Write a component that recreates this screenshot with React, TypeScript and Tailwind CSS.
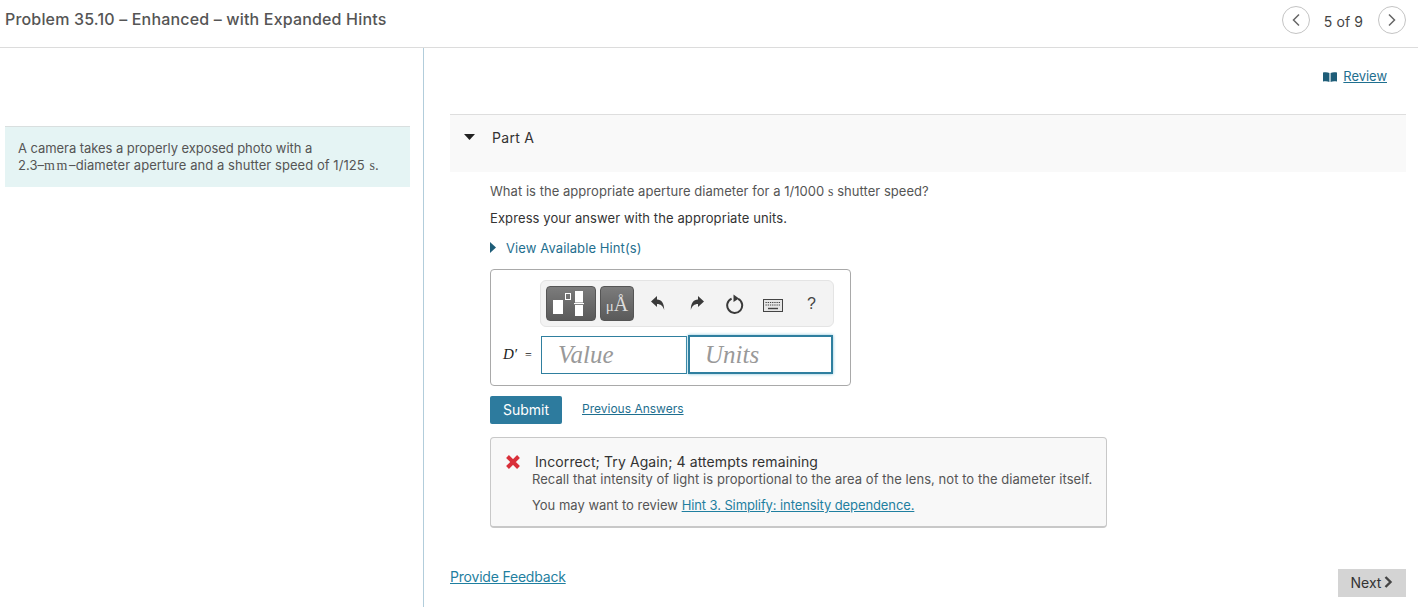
import * as React from 'react';

const font = { fontFamily: 'Inter, "Liberation Sans", Arial, sans-serif' };
const serif = { fontFamily: '"Liberation Serif", serif' };

function ChevronCircle({ dir }: { dir: 'left' | 'right' }) {
  return (
    <button className="w-[28px] h-[28px] rounded-full border border-[#c4c4c4] bg-white flex items-center justify-center">
      <svg width="10" height="14" viewBox="0 0 10 14" fill="none" stroke="#666" strokeWidth="1.5">
        {dir === 'left' ? <path d="M8 1.5 2.5 7 8 12.5" /> : <path d="M2 1.5 7.5 7 2 12.5" />}
      </svg>
    </button>
  );
}

function TemplatesIcon() {
  return (
    <svg width="36" height="28" viewBox="0 0 36 28" fill="white">
      <rect x="0" y="10" width="10" height="14" />
      <rect x="12.5" y="3.5" width="5" height="6" fill="none" stroke="white" strokeWidth="1" />
      <rect x="22" y="1" width="8" height="11.5" />
      <rect x="21" y="13" width="10" height="1.2" />
      <rect x="22" y="15" width="8" height="11" />
    </svg>
  );
}

function Toolbar() {
  return (
    <div className="ml-[37px] w-[294px] h-[47px] rounded-[6px] bg-[#f3f3f3] border border-[#e4e4e4] flex items-center pl-[5px]">
      <div className="w-[50px] h-[35px] rounded-[4px] border border-[#555] bg-gradient-to-b from-[#7c7c7c] to-[#5a5a5a] flex items-center justify-center overflow-hidden">
        <TemplatesIcon />
      </div>
      <div className="ml-[4px] w-[34px] h-[35px] rounded-[4px] border border-[#555] bg-gradient-to-b from-[#7c7c7c] to-[#5a5a5a] flex items-end justify-center pb-[6px] text-[#dddddd] leading-none" style={serif}>
        <span className="text-[15px]">μ</span>
        <span className="text-[20px]">Å</span>
      </div>
      <svg className="ml-[16px]" width="16" height="17" viewBox="0 0 16 17" fill="#3a3a3a">
        <path d="M1 6.5 7 1v3.4c4.6.2 7.2 3.4 7.2 10.6-1.4-4.4-3.4-6-7.2-6.1V12Z" />
      </svg>
      <svg className="ml-[23px]" width="16" height="17" viewBox="0 0 16 17" fill="#3a3a3a">
        <path d="M15 6.5 9 1v3.4C4.4 4.6 1.8 7.8 1.8 15c1.4-4.4 3.4-6 7.2-6.1V12Z" />
      </svg>
      <svg className="ml-[21px]" width="18" height="20" viewBox="0 0 18 20" fill="none" stroke="#3a3a3a" strokeWidth="2">
        <path d="M12.2 4.8A7.5 7.5 0 1 1 5.6 4.6" />
        <path d="M7.5 0.6 13 4.4 7.5 8Z" fill="#3a3a3a" stroke="none" />
      </svg>
      <svg className="ml-[19px] mt-[3px]" width="20" height="13" viewBox="0 0 20 13" fill="none">
        <rect x="0.5" y="0.5" width="19" height="12" fill="#e6e6e6" stroke="#444" />
        <path d="M2.5 3.5h15M2.5 6h15" stroke="#444" strokeWidth="1.2" strokeDasharray="1.3 0.9" />
        <path d="M5 9.5h10" stroke="#444" strokeWidth="1.4" />
      </svg>
      <span className="ml-[24px] text-[16px] leading-none text-[#444]" style={{ fontFamily: '"Liberation Sans", sans-serif' }}>?</span>
    </div>
  );
}

export default function App() {
  return (
    <div className="w-[1418px] h-[607px] bg-white overflow-hidden text-[#333]" style={font}>
      <header className="h-[48px] border-b border-[#dcdcdc] flex items-center justify-between pl-[5px] pr-[12px] pb-[10px]">
        <h1 className="text-[16px] text-[#555] font-medium tracking-[0.17px]">Problem 35.10 – Enhanced – with Expanded Hints</h1>
        <div className="flex items-center mt-[3px] text-[14px] text-[#444]">
          <ChevronCircle dir="left" />
          <span className="ml-[14px] mr-[15px] mt-[3px] tracking-[0.1px]">5 of 9</span>
          <ChevronCircle dir="right" />
        </div>
      </header>

      <div className="flex h-[559px]">
        <aside className="w-[424px] shrink-0 border-r border-[#b2cddb] pl-[5px] pt-[78px]">
          <div className="w-[405px] h-[61px] bg-[#e5f4f4] border-t border-[#d9dfdf] pl-[13px] pt-[13px] text-[13px] leading-[17px] text-[#555]">
            <p className="tracking-[-0.06px]">A camera takes a properly exposed photo with a</p>
            <p className="tracking-[0.06px]">
              2.3–<span style={serif} className="text-[14px] tracking-[1.6px]">mm</span>–diameter aperture and a shutter speed of 1/125 <span style={serif} className="text-[14px] ml-[1px]">s</span>.
            </p>
          </div>
        </aside>

        <main className="flex-1 pl-[26px] pr-[12px] flex flex-col">
          <div className="h-[66px] pt-[20px] flex justify-end pr-[19px]">
            <a className="flex items-center h-[17px] text-[13px] text-[#1f6f8f] underline">
              <svg width="14" height="10" viewBox="0 0 14 10" fill="#1e5d78">
                <path d="M0 0.6C2 0 4.6 0 6.4 1v9C4.6 9 2 9 0 9.6ZM7.6 1C9.4 0 12 0 14 0.6v9C12 9 9.4 9 7.6 10Z" />
              </svg>
              <span className="ml-[6px] tracking-[-0.05px]">Review</span>
            </a>
          </div>

          <div className="h-[58px] bg-[#f9f9f9] border-t border-[#dedede] flex items-start pt-[14px] pl-[14px]">
            <svg className="mt-[5px]" width="11" height="6" viewBox="0 0 11 6" fill="#222">
              <path d="M0 0h11L5.5 6Z" />
            </svg>
            <span className="ml-[17px] text-[14px] leading-[17px] text-[#333] tracking-[0.3px]">Part A</span>
          </div>

          <div className="pl-[40px] flex flex-col items-start">
            <p className="mt-[11px] text-[13px] leading-[17px] text-[#555] tracking-[0.04px]">
              What is the appropriate aperture diameter for a 1/1000 <span style={serif} className="text-[14px]">s</span> shutter speed?
            </p>
            <p className="mt-[10px] text-[13px] leading-[17px] text-[#333] tracking-[0.1px]">Express your answer with the appropriate units.</p>
            <div className="mt-[13px] flex items-center h-[17px] text-[13px] text-[#1f6f8f] tracking-[0.1px]">
              <svg width="6" height="11" viewBox="0 0 6 11" fill="#1e5d78" className="mb-[2px]">
                <path d="M0 0l6 5.5L0 11Z" />
              </svg>
              <span className="ml-[10px]">View Available Hint(s)</span>
            </div>

            <div className="mt-[12px] w-[361px] h-[117px] rounded-[4px] border border-[#a9a9a9] pl-[12px] pt-[10px]">
              <Toolbar />
              <div className="flex items-center mt-[8px]">
                <span className="w-[38px] text-[15px] text-[#222] whitespace-nowrap" style={serif}>
                  <i>D′</i> <span className="text-[12px] ml-[4px]">=</span>
                </span>
                <div className="w-[146px] h-[38px] border border-[#2f7f9f] flex items-center pl-[16px] text-[25px] italic text-[#999]" style={serif}>
                  Value
                </div>
                <div className="ml-[1px] w-[145px] h-[39px] border-2 border-[#2f7f9f] shadow-[0_0_3px_#7fc0d8] flex items-center pl-[15px] text-[25px] italic text-[#999]" style={serif}>
                  Units
                </div>
              </div>
            </div>

            <div className="mt-[10px] flex items-center">
              <button className="w-[72px] h-[28px] rounded-[2px] bg-[#2d7b9e] text-white text-[14px] pb-[2px]">Submit</button>
              <a className="ml-[20px] mb-[2px] text-[12px] text-[#1f6f8f] underline">Previous Answers</a>
            </div>

            <div className="mt-[13px] w-[617px] h-[91px] rounded-[4px] border border-[#c8c8c8] border-b-2 bg-[#f8f8f8] pl-[15px] pt-[15px]">
              <div className="flex items-center h-[17px]">
                <svg width="14" height="14" viewBox="0 0 14 14" stroke="#d9303a" strokeWidth="4">
                  <path d="M1.5 1.5 12.5 12.5M12.5 1.5 1.5 12.5" />
                </svg>
                <span className="ml-[15px] text-[14px] text-[#333] tracking-[0.1px]">Incorrect; Try Again; 4 attempts remaining</span>
              </div>
              <p className="ml-[26px] mt-[1px] text-[13px] leading-[17px] text-[#555] tracking-[0.05px]">Recall that intensity of light is proportional to the area of the lens, not to the diameter itself.</p>
              <p className="ml-[26px] mt-[9px] text-[13px] leading-[17px] text-[#555]">
                You may want to review <a className="text-[#1f7fa0] underline tracking-[-0.1px]">Hint 3. Simplify: intensity dependence.</a>
              </p>
            </div>
          </div>

          <div className="mt-[38px] flex items-start justify-between">
            <a className="text-[14px] text-[#1f7fa0] underline tracking-[-0.2px]">Provide Feedback</a>
            <button className="mt-[3px] w-[68px] h-[28px] bg-[#d4d4d4] text-[14px] text-[#333] flex items-center justify-center gap-[3px] pb-[2px]">
              Next
              <svg width="9" height="12" viewBox="0 0 9 12" fill="none" stroke="#444" strokeWidth="2.4">
                <path d="M1.5 1 6.5 6 1.5 11" />
              </svg>
            </button>
          </div>
        </main>
      </div>
    </div>
  );
}
